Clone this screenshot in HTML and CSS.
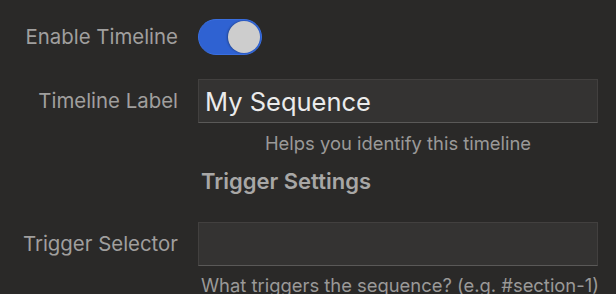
FILE: index.html
```html
<!DOCTYPE html>
<html lang="en">
<head>
  <meta charset="UTF-8">
  <title>Timeline Settings</title>
  <link rel="stylesheet" href="styles.css">
</head>
<body>
  <form class="settings">
    <!-- Enable toggle -->
    <div class="row row-toggle">
      <label class="label">Enable Timeline</label>
      <div class="field">
        <span class="toggle on"><span class="knob"></span></span>
      </div>
    </div>

    <!-- Label -->
    <div class="row row-input">
      <label class="label">Timeline Label</label>
      <div class="field">
        <input class="text-input big" type="text" value="My Sequence">
      </div>
    </div>
    <div class="row">
      <span></span>
      <p class="hint center">Helps you identify this timeline</p>
    </div>

    <div class="row row-heading">
      <span></span>
      <h3 class="section-title">Trigger Settings</h3>
    </div>

    <!-- Trigger -->
    <div class="row row-input2">
      <label class="label">Trigger Selector</label>
      <div class="field">
        <input class="text-input" type="text" value="">
      </div>
    </div>
    <div class="row">
      <span></span>
      <p class="hint last">What triggers the sequence? (e.g. #section-1)</p>
    </div>
  </form>
</body>
</html>
```

FILE: styles.css
```css
* { margin: 0; padding: 0; box-sizing: border-box; }
html, body { width: 100%; height: 100%; overflow: hidden; }

body {
  background: #2a2928;
  font-family: Inter, "Helvetica Neue", Arial, sans-serif;
  color: #9c9b9a;
}

.settings {
  padding-top: 19px;
}

/* label column + field column */
.row {
  display: grid;
  grid-template-columns: 178px 400px;
  column-gap: 20px;
  align-items: center;
}

.label {
  text-align: right;
  font-size: 20.4px;
  line-height: 24px;
  color: #a09f9e;
  white-space: nowrap;
}

.field {
  display: flex;
  align-items: center;
}

/* Toggle switch */
.toggle {
  position: relative;
  display: inline-block;
  width: 64px;
  height: 36px;
  border-radius: 18px;
  background: #2f62d2;
  border: 1px solid #3a6fe0;
}
.toggle .knob {
  position: absolute;
  top: 1px;
  right: 1px;
  width: 32px;
  height: 32px;
  border-radius: 50%;
  background: #cdcdcd;
  box-shadow: -1px 0 2px rgba(0,0,0,0.3);
}

.row-input { margin-top: 24px; }
.row-input2 { margin-top: 28px; }

.text-input {
  width: 400px;
  height: 44px;
  background: #343332;
  border: 1px solid #42403f;
  border-bottom-color: #5a5958;
  color: #ebebeb;
  font-family: inherit;
  padding: 0 6px;
  outline: none;
}
.text-input.big { font-size: 25.5px; }

.hint {
  font-size: 18.4px;
  color: #9a9998;
  line-height: 22px;
  padding-top: 9px;
  white-space: nowrap;
}
.hint.center { text-align: center; }
.hint.last {
  padding-left: 3px;
  padding-top: 12px;
  line-height: 14px;
}

.row-heading { margin-top: 14px; }
.section-title {
  font-size: 22px;
  line-height: 26px;
  font-weight: 600;
  color: #a8a7a6;
  padding-left: 3px;
}
```
